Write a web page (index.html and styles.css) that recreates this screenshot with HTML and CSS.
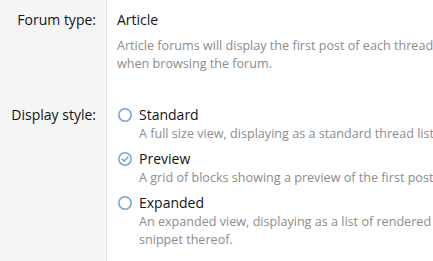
FILE: index.html
```html
<!DOCTYPE html>
<html>
<head>
<meta charset="utf-8">
<link rel="stylesheet" href="styles.css">
</head>
<body>
<div class="form">
  <div class="row row-first">
    <div class="label">Forum type:</div>
    <div class="value">
      <div class="main">Article</div>
      <div class="explain">Article forums will display the first post of each thread and its replies when browsing the forum.</div>
    </div>
  </div>
  <div class="row row-second">
    <div class="label">Display style:</div>
    <div class="value">
      <ul class="choices">
        <li class="choice">
          <span class="radio">
            <svg width="16" height="16" viewBox="0 0 16 16"><circle cx="8" cy="8" r="6.2" fill="none" stroke="#7ba7d0" stroke-width="1.6"/></svg>
          </span>
          <div class="choice-body">
            <div class="main">Standard</div>
            <div class="explain">A full size view, displaying as a standard thread list.</div>
          </div>
        </li>
        <li class="choice">
          <span class="radio">
            <svg width="16" height="16" viewBox="0 0 16 16"><circle cx="8" cy="8" r="6.2" fill="none" stroke="#7ba7d0" stroke-width="1.6"/><path d="M5.2 8.2 L7.2 10.1 L10.9 6.2" fill="none" stroke="#7ba7d0" stroke-width="1.6" stroke-linecap="round" stroke-linejoin="round"/></svg>
          </span>
          <div class="choice-body">
            <div class="main">Preview</div>
            <div class="explain">A grid of blocks showing a preview of the first post of each thread.</div>
          </div>
        </li>
        <li class="choice">
          <span class="radio">
            <svg width="16" height="16" viewBox="0 0 16 16"><circle cx="8" cy="8" r="6.2" fill="none" stroke="#7ba7d0" stroke-width="1.6"/></svg>
          </span>
          <div class="choice-body">
            <div class="main">Expanded</div>
            <div class="explain">An expanded view, displaying as a list of rendered first posts with a snippet thereof.</div>
          </div>
        </li>
      </ul>
    </div>
  </div>
</div>
</body>
</html>
```
FILE: styles.css
```css
html, body {
  margin: 0;
  padding: 0;
  background: #ffffff;
  overflow: hidden;
}
body {
  width: 433px;
  height: 261px;
  font-family: "Open Sans", "Noto Sans", sans-serif;
  color: #141414;
}
.form {
  display: flex;
  flex-direction: column;
  min-height: 261px;
  background: linear-gradient(to right, #f5f5f5 0, #f5f5f5 106px, #e2e2e2 106px, #e2e2e2 107px, #ffffff 107px);
}
.row {
  display: flex;
}
.row-first {
  padding-top: 10px;
  padding-bottom: 32px;
}
.label {
  width: 96px;
  flex: none;
  text-align: right;
  font-size: 14px;
  line-height: 20px;
  color: #141414;
  padding-right: 11px;
  white-space: nowrap;
}
.value {
  flex: none;
  width: 415px;
  padding-left: 10px;
}
.main {
  font-size: 14px;
  line-height: 20px;
  white-space: nowrap;
}
.explain {
  font-size: 12.6px;
  line-height: 18px;
  color: #8c8c8c;
  margin-top: 7px;
}
.choices {
  list-style: none;
  margin: 0;
  padding: 0;
  display: flex;
  flex-direction: column;
  gap: 6px;
}
.choice {
  display: flex;
  gap: 6px;
}
.radio {
  flex: none;
  width: 16px;
  height: 20px;
  display: flex;
  align-items: center;
}
.radio svg {
  display: block;
}
.choice-body {
  flex: 1;
  min-width: 0;
}
.choice-body .explain {
  margin-top: 0;
}
```
